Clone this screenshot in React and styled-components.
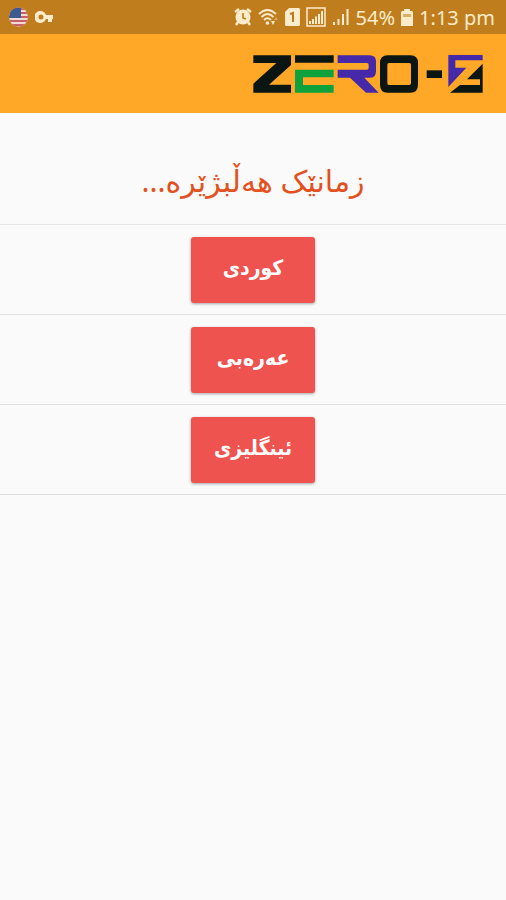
import React from "react";
import styled, { createGlobalStyle } from "styled-components";

const GlobalStyle = createGlobalStyle`
  body {
    margin: 0;
    background: #fafafa;
    font-family: "Noto Sans", "DejaVu Sans", sans-serif;
  }
`;

const Screen = styled.div`
  min-height: 100vh;
`;

const StatusBar = styled.div`
  display: flex;
  align-items: center;
  justify-content: space-between;
  height: 34px;
  padding: 0 11px 0 8px;
  background: #c07d1e;
  color: #fdeccb;
  font-size: 20px;
`;

const StatusGroup = styled.div`
  display: flex;
  align-items: center;
  gap: 6px;
`;

const Header = styled.header`
  display: flex;
  align-items: center;
  justify-content: flex-end;
  height: 79px;
  padding: 0 22px;
  box-sizing: border-box;
  background: #ffa726;
`;

const Title = styled.h1`
  margin: 0;
  padding: 44px 16px 20px;
  border-bottom: 1px solid #e4e6e6;
  color: #e2511e;
  font-size: 30px;
  font-weight: 400;
  line-height: 47px;
  text-align: center;
`;

const LanguageList = styled.ul`
  margin: 0;
  padding: 0;
  list-style: none;
`;

const LanguageRow = styled.li`
  display: flex;
  justify-content: center;
  padding: 12px 0 11px;
  border-bottom: 1px solid #e0e0e0;
`;

const LanguageButton = styled.button`
  width: 124px;
  height: 66px;
  padding: 0 0 4px;
  border: 0;
  border-radius: 3px;
  background: #ef5350;
  box-shadow: 0 1px 3px rgba(0, 0, 0, 0.35);
  color: #fff;
  font-family: "DejaVu Sans Condensed", "DejaVu Sans", sans-serif;
  font-size: 21px;
  font-weight: 700;
  cursor: pointer;
`;

const languages = [
  { code: "ckb", name: "کوردی" },
  { code: "ar", name: "عەرەبی" },
  { code: "en", name: "ئینگلیزی" }
];

const FlagIcon = () => (
  <svg width="21" height="20" viewBox="0 0 21 20" aria-hidden="true">
    <clipPath id="flag">
      <circle cx="10.5" cy="10" r="9.5" />
    </clipPath>
    <g clipPath="url(#flag)">
      <rect width="21" height="20" fill="#f3dcd6" />
      <path d="M0 2h21M0 6h21M0 10h21M0 14h21M0 18h21" stroke="#c8606a" strokeWidth="2" />
      <rect width="13" height="11" fill="#3d5a91" />
    </g>
  </svg>
);

const KeyIcon = () => (
  <svg width="19" height="12" viewBox="0 0 19 12" aria-hidden="true">
    <path
      fill="currentColor"
      fillRule="evenodd"
      d="M6 0a6 6 0 1 0 5 8h2v3h4V8h1V4h-7A6 6 0 0 0 6 0zM6 3.5a2.500 2.500 0 1 1 0 5a2.500 2.500 0 1 1 0-5z"
    />
  </svg>
);

const AlarmIcon = () => (
  <svg width="18" height="18" viewBox="0 0 18 18" aria-hidden="true">
    <circle cx="9" cy="9" r="7.5" fill="currentColor" />
    <path
      d="M1 4l4-3M17 4l-4-3M4 14l-2 3M14 14l2 3"
      stroke="currentColor"
      strokeWidth="2.5"
    />
    <path d="M9 5v5l3 1" fill="none" stroke="#c07d1e" strokeWidth="1.6" />
  </svg>
);

const WifiIcon = () => (
  <svg width="21" height="18" viewBox="0 0 21 18" aria-hidden="true">
    <g fill="none" stroke="currentColor" strokeWidth="1.8">
      <path d="M1 6Q9.500-2 18 6" />
      <path d="M3.500 9Q9.500 3 15.500 9" />
      <path d="M6 12Q9.500 8.500 13 12" />
    </g>
    <circle cx="9.5" cy="15" r="1.8" fill="currentColor" />
    <path d="M13 13l2 4l2-4z" fill="currentColor" />
    <path d="M16 12l2-3l2 3z" fill="currentColor" opacity=".4" />
  </svg>
);

const SimIcon = () => (
  <svg width="15" height="18" viewBox="0 0 15 18" aria-hidden="true">
    <path d="M4 0h10l1 1v16l-1 1H1l-1-1V4z" fill="currentColor" />
    <path d="M5 6l3-1v9" fill="none" stroke="#c07d1e" strokeWidth="2" />
  </svg>
);

const SignalIcon = ({ boxed }) => (
  <svg
    width={boxed ? 20 : 18}
    height="20"
    viewBox={boxed ? "0 0 20 20" : "1 0 18 20"}
    aria-hidden="true"
  >
    {boxed && (
      <rect x="1" y="1" width="18" height="18" fill="none" stroke="currentColor" strokeWidth="1.5" />
    )}
    <path
      d={
        boxed
          ? "M4 17v-3M7 17v-5M10 17V9.500M13 17V7M16 17V4"
          : "M3 18v-3M7.500 18v-6M12 18V7M16.500 18V2"
      }
      stroke="currentColor"
      strokeWidth="2"
    />
  </svg>
);

const BatteryIcon = () => (
  <svg width="12" height="17" viewBox="0 0 12 17" aria-hidden="true">
    <path d="M3 0h6v2h2l1 1v14H0V3l1-1h2z" fill="currentColor" />
    <path d="M2 5h8v3H2z" fill="#c07d1e" opacity=".55" />
  </svg>
);

const Logo = () => (
  <svg width="231" height="38" viewBox="0 0 693 114" role="img" aria-label="ZERO-Z">
    <g fill="#0b1512">
      <path d="M1 1H114V30L48 89H114V113H1V86L70 24H1Z" />
      <path d="M126 1H242V23H126Z" />
      <path
        fillRule="evenodd"
        d="M404 1H472Q495 1 495 24V90Q495 113 472 113H404Q381 113 381 90V24Q381 1 404 1ZM408 24Q403 24 403 29V85Q403 90 408 90H469Q474 90 474 85V29Q474 24 469 24Z"
      />
      <path d="M521 46H567V69H521Z" />
    </g>
    <path d="M126 44H242V67H150V90H242V113H126Z" fill="#0fa13c" />
    <path
      d="M254 1H350Q369 1 369 19V50Q369 68 350 68H334L377 113H339L291 68H254V44H342Q347 44 347 39V29Q347 24 342 24H254Z"
      fill="#4529a8"
    />
    <path d="M586 0H689V16H607V38H640L586 96Z" fill="#4529a8" />
    <path d="M689 26V113H591L621 90H681V73H642Z" fill="#0b1512" />
  </svg>
);

const App = () => (
  <Screen>
    <GlobalStyle />
    <StatusBar>
      <StatusGroup>
        <FlagIcon />
        <KeyIcon />
      </StatusGroup>
      <StatusGroup>
        <AlarmIcon />
        <WifiIcon />
        <SimIcon />
        <SignalIcon boxed />
        <SignalIcon />
        <span>54%</span>
        <BatteryIcon />
        <span>1:13 pm</span>
      </StatusGroup>
    </StatusBar>
    <Header>
      <Logo />
    </Header>
    <main dir="rtl" lang="ckb">
      <Title>زمانێک هەڵبژێرە...</Title>
      <LanguageList>
        {languages.map(language => (
          <LanguageRow key={language.code}>
            <LanguageButton type="button">{language.name}</LanguageButton>
          </LanguageRow>
        ))}
      </LanguageList>
    </main>
  </Screen>
);

export default App;
